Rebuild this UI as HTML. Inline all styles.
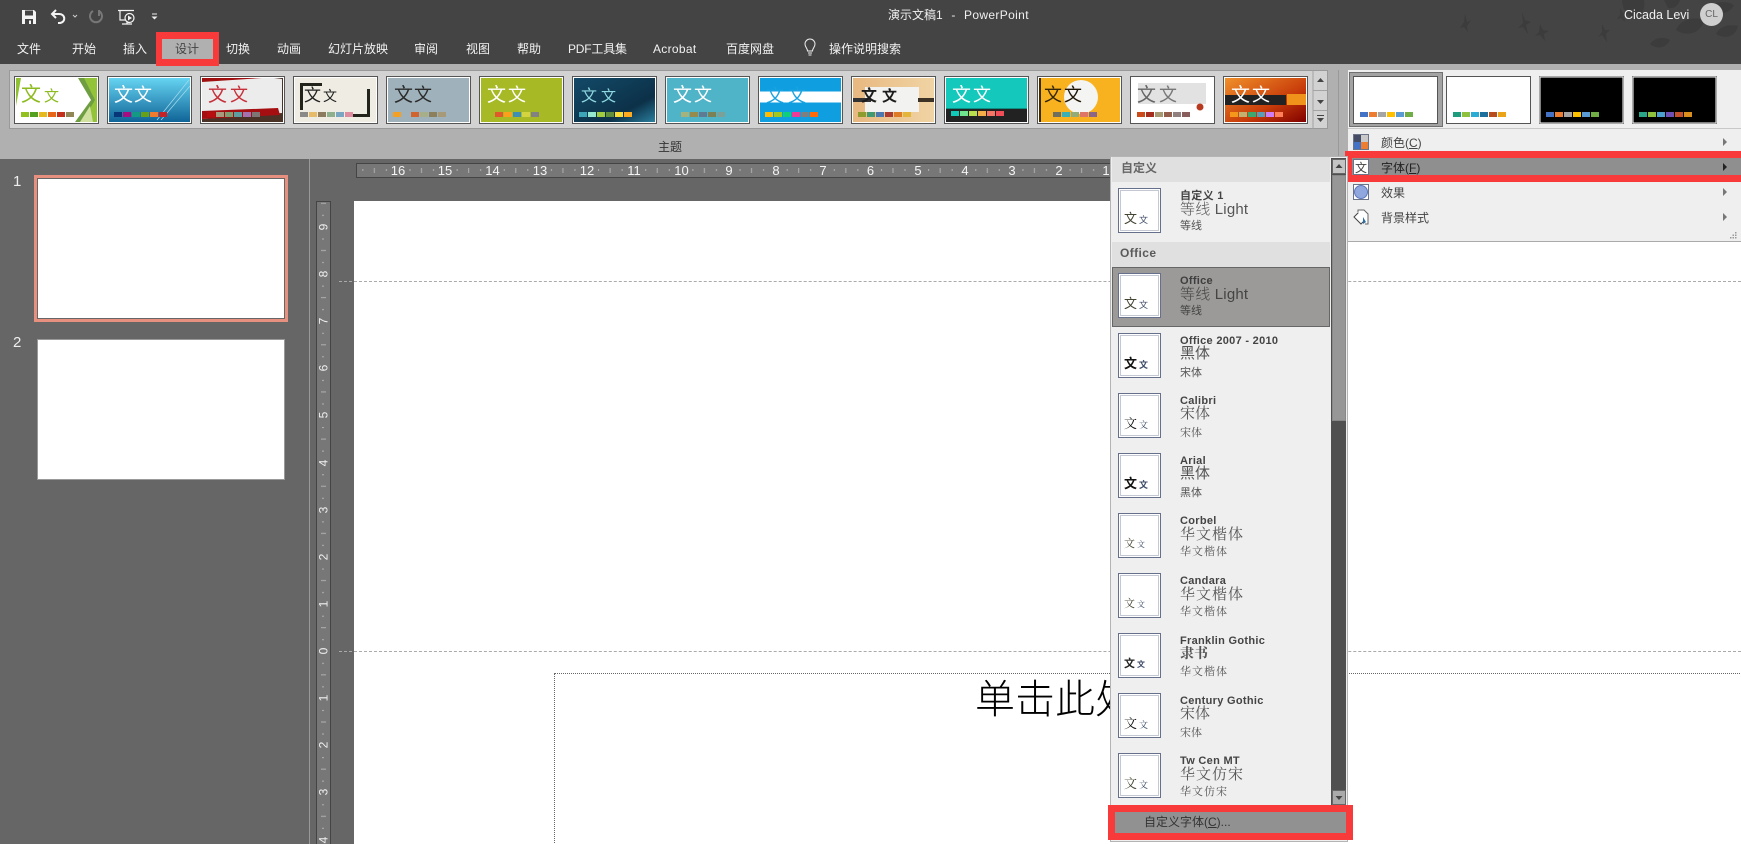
<!DOCTYPE html>
<html lang="zh"><head><meta charset="utf-8"><title>演示文稿1 - PowerPoint</title>
<style>
html,body{margin:0;padding:0;width:1741px;height:844px;overflow:hidden;background:#666}
body{position:relative;font-family:"Liberation Sans","WenQuanYi Zen Hei","Noto Sans CJK SC",sans-serif;font-size:12px;color:#444}
.a,.m,.r,.n,.l2,.l3,.th{position:absolute}
.a,.m,.n,.l2,.l3{white-space:nowrap}
.m{top:39px;height:20px;line-height:20px;color:#f2f2f2;font-size:12px}
svg{position:absolute;overflow:hidden}
svg text{font-family:"Liberation Sans","WenQuanYi Zen Hei","Noto Sans CJK SC",sans-serif}
.th{left:1118px;width:41px;height:43px;border:1px solid #66708c;background:#fff;box-shadow:inset 0 0 0 1px #fff,inset 0 0 0 2px #c3c8d2}
.th b{position:absolute;left:5px;bottom:5px;font-weight:normal;font-size:13px;line-height:14px;color:#443;white-space:nowrap}
.th b i{font-style:normal;font-size:9px;margin-left:2px;color:#3c4a66}
.n{left:1180px;font-weight:bold;font-size:11px;line-height:12px;letter-spacing:.3px;color:#444}
.l2{left:1180px;font-size:15px;line-height:16px;color:#555}
.l3{left:1180px;font-size:11px;line-height:12px;color:#555}
.s{font-family:"Liberation Serif","Noto Serif CJK SC",serif}
.k{letter-spacing:1px}
.mi{left:1381px;height:16px;line-height:16px;font-size:12px;color:#444}
</style></head><body>
<!-- top bars -->
<div class="a" style="left:0;top:0;width:1741px;height:64px;background:#444"></div>
<div class="a" style="left:0;top:64px;width:1741px;height:95px;background:#b0b0b0"></div>
<svg style="left:1440px;top:0" width="301" height="64" viewBox="1440 0 301 64" fill="#3c3c3c">
<path d="M1465 14l2 8 4-2-4 6 1 6-4-5-4 1 4-6z"/><path d="M1522 12l3 8 6 2-5 3 2 9-5-7-5 1 5-5z"/><path d="M1540 24l3 6 6 1-5 3 1 7-5-6-5 1 4-4z"/><path d="M1602 24l3 6 5 0-4 4 1 8-5-7-4 2 4-5z"/><path d="M1620 8l3 5 5 1-4 3 1 5-4-4-4 1 3-4z"/>
<path d="M1622 0h22c2 8-3 18-10 18-7-2-12-10-12-18z"/><path d="M1676 30c4-10 16-14 28-10-2 12-16 18-28 10z"/><path d="M1664 0h16c-2 6-6 9-12 8z"/><path d="M1708 8c6-6 18-8 26-3-4 9-18 12-26 3z"/><path d="M1716 34c4-8 12-10 22-8-2 10-12 14-22 8z"/><path d="M1650 44c5-6 12-8 20-4-4 8-13 10-20 4z"/>
</svg>
<!-- QAT icons -->
<svg style="left:18px;top:6px" width="145" height="22" viewBox="18 6 145 22">
<path d="M22 10h12l2 2v12H22z" fill="#f4f4f4"/><rect x="25" y="10.500" width="8" height="5" fill="#444"/><rect x="25" y="19" width="8" height="5" fill="#444"/><rect x="29" y="20.500" width="2" height="3.500" fill="#f4f4f4"/>
<path d="M56 10l-4 4 4 4M52 14h7c7 0 7 9 0 9h-1" fill="none" stroke="#f4f4f4" stroke-width="2"/>
<path d="M73 15l2 2 2-2" fill="none" stroke="#ccc" stroke-width="1"/>
<path d="M93 11a6 6 0 1 0 6 0M99 10v5h-1" fill="none" stroke="#777" stroke-width="2"/>
<path d="M118 10.500h16M120 11v9h6" fill="none" stroke="#f4f4f4" stroke-width="1.200"/><circle cx="129.500" cy="18" r="4.500" fill="none" stroke="#f4f4f4" stroke-width="1.200"/><path d="M128 15.500l4 2.500-4 2.500z" fill="#f4f4f4"/><path d="M122 24h10M127 21v3" stroke="#f4f4f4" stroke-width="1.200"/>
<path d="M152 14h5" stroke="#eee" stroke-width="1"/><path d="M151.500 16.500h6l-3 3z" fill="#eee"/>
</svg>
<div class="a" style="left:888px;top:7px;height:16px;line-height:16px;color:#f0f0f0;font-size:12px;word-spacing:1px">演示文稿1&nbsp; -&nbsp; <span style="letter-spacing:.35px">PowerPoint</span></div>
<div class="a" style="left:1624px;top:7px;height:16px;line-height:16px;color:#f0f0f0;font-size:12.500px">Cicada Levi</div>
<div class="a" style="left:1700px;top:3px;width:23px;height:23px;border-radius:50%;background:#cfcfcf;color:#666;font-size:10px;line-height:23px;text-align:center">CL</div>
<!-- tab -->
<div class="a" style="left:156px;top:32px;width:51px;height:20px;border:6px solid #f93a3a;border-top-width:7px;border-bottom-width:7px;background:#b0b0b0"></div>
<div class="m" style="left:17px">文件</div><div class="m" style="left:72px">开始</div><div class="m" style="left:123px">插入</div><div class="m" style="left:175px;color:#444">设计</div><div class="m" style="left:226px">切换</div><div class="m" style="left:277px">动画</div><div class="m" style="left:328px">幻灯片放映</div><div class="m" style="left:414px">审阅</div><div class="m" style="left:466px">视图</div><div class="m" style="left:517px">帮助</div><div class="m" style="left:568px;letter-spacing:-.2px">PDF工具集</div><div class="m" style="left:653px;letter-spacing:.3px">Acrobat</div><div class="m" style="left:726px">百度网盘</div><div class="m" style="left:829px">操作说明搜索</div>
<svg style="left:803px;top:38px" width="14" height="20" viewBox="0 0 14 20"><path d="M4.500 13c0-3-2.500-3.500-2.500-7a5 5 0 0 1 10 0c0 3.500-2.500 4-2.500 7zM5 15h4M5.500 17h3" fill="none" stroke="#eee" stroke-width="1"/></svg>
<!-- gallery -->
<div class="a" style="left:9px;top:70px;width:1317px;height:57px;background:#d2d2d2;border:1px solid #999"></div>
<svg style="left:0;top:70px" width="1340" height="60" viewBox="0 70 1340 60">
<defs>
<linearGradient id="g2" x1="0" y1="0" x2="0" y2="1"><stop offset="0" stop-color="#66d4f2"/><stop offset="1" stop-color="#0f6497"/></linearGradient>
<linearGradient id="g7" x1="0" y1="0" x2="1" y2="1"><stop offset="0" stop-color="#134a68"/><stop offset=".7" stop-color="#0c3148"/><stop offset="1" stop-color="#2a7f9e"/></linearGradient>
<linearGradient id="g14" x1="0" y1="0" x2="1" y2="1"><stop offset="0" stop-color="#f0902a"/><stop offset=".6" stop-color="#c83c0a"/><stop offset="1" stop-color="#800000"/></linearGradient>
<linearGradient id="g10" x1="0" y1="0" x2="1" y2="0"><stop offset="0" stop-color="#e8b880"/><stop offset="1" stop-color="#f0d4a4"/></linearGradient>
</defs>
<g font-size="19" stroke="none">
<g transform="translate(14,76)"><rect x=".5" y=".5" width="84" height="47" fill="#fff" stroke="#555"/><path d="M2 2h5l-5 28z" fill="#8fc031"/><path d="M64 2h19v44H61l16-22z" fill="#6f9e42"/><path d="M70 2h13v44H68l13-22z" fill="#93c339"/><path d="M66 46l10-16 3 16z" fill="#cfe09f"/><text x="7" y="25" fill="#8dbb1f" font-size="20">文</text><text x="30" y="25" fill="#8dbb1f" font-size="15">文</text><g transform="translate(7,36)"><rect width="8" height="5" fill="#92c01f"/><rect x="9" width="8" height="5" fill="#54a021"/><rect x="18" width="8" height="5" fill="#e6b91e"/><rect x="27" width="8" height="5" fill="#e76618"/><rect x="36" width="8" height="5" fill="#c42f19"/><rect x="45" width="8" height="5" fill="#918655"/></g></g>
<g transform="translate(107,76)"><rect x=".5" y=".5" width="84" height="47" fill="#fff" stroke="#555"/><rect x="2" y="2" width="81" height="44" fill="url(#g2)"/><path d="M50 44L82 4M54 44L83 10" stroke="#a6dbee" stroke-width=".7"/><text x="7" y="25" fill="#fff">文</text><text x="27" y="25" fill="#fff" font-size="18">文</text><g transform="translate(7,36)"><rect width="8" height="5" fill="#073779"/><rect x="9" width="8" height="5" fill="#a50d80"/><rect x="18" width="8" height="5" fill="#139a84"/><rect x="27" width="8" height="5" fill="#66a019"/><rect x="36" width="8" height="5" fill="#ef7b2f"/><rect x="45" width="8" height="5" fill="#c42327"/></g></g>
<g transform="translate(200,76)"><rect x=".5" y=".5" width="84" height="47" fill="#fff" stroke="#555"/><rect x="2" y="2" width="81" height="44" fill="#4a3226"/><path d="M2 2h72l8 1v34L2 43z" fill="#ececec"/><path d="M2 2h60L2 6z" fill="#a01010"/><path d="M2 35l76-3 2 7L2 43z" fill="#a60f12"/><text x="8" y="25" fill="#c6303a">文</text><text x="30" y="25" fill="#c6303a" font-size="18">文</text><g transform="translate(7,36)"><rect width="8" height="5" fill="#b80e0f"/><rect x="9" width="8" height="5" fill="#a79a7d"/><rect x="18" width="8" height="5" fill="#7f9e72"/><rect x="27" width="8" height="5" fill="#5f9ea0"/><rect x="36" width="8" height="5" fill="#a373b1"/><rect x="45" width="8" height="5" fill="#7e7674"/></g></g>
<g transform="translate(293,76)"><rect x=".5" y=".5" width="84" height="47" fill="#fff" stroke="#555"/><rect x="2" y="2" width="81" height="44" fill="#efece3"/><path d="M7 7h22v3H10v24H7zM74 13h3v28H55v-3h19z" fill="#22231a"/><text x="11" y="25" fill="#222" font-size="17">文</text><text x="30" y="25" fill="#222" font-size="14">文</text><g transform="translate(7,36)"><rect width="8" height="5" fill="#8a8a88"/><rect x="9" width="8" height="5" fill="#e6bc6a"/><rect x="18" width="8" height="5" fill="#8c7b5e"/><rect x="27" width="8" height="5" fill="#8fb08c"/><rect x="36" width="8" height="5" fill="#7ba6c2"/><rect x="45" width="8" height="5" fill="#e08ca0"/></g></g>
<g transform="translate(386,76)"><rect x=".5" y=".5" width="84" height="47" fill="#fff" stroke="#555"/><rect x="2" y="2" width="81" height="44" fill="#9fb2bb"/><text x="8" y="25" fill="#2b2b2b">文</text><text x="28" y="25" fill="#2b2b2b" font-size="18">文</text><g transform="translate(7,36)"><rect width="8" height="5" fill="#f4a024"/><rect x="18" width="8" height="5" fill="#d1642e"/><rect x="27" width="8" height="5" fill="#a7ae8a"/><rect x="36" width="8" height="5" fill="#8c7f5b"/><rect x="45" width="8" height="5" fill="#a79a79"/></g></g>
<g transform="translate(479,76)"><rect x=".5" y=".5" width="84" height="47" fill="#fff" stroke="#555"/><rect x="2" y="2" width="81" height="44" fill="#a7ba26"/><text x="8" y="25" fill="#fff">文</text><text x="29" y="25" fill="#fff" font-size="18">文</text><g transform="translate(16,36)"><rect width="8" height="5" fill="#e15a29"/><rect x="9" width="8" height="5" fill="#f9a11b"/><rect x="18" width="8" height="5" fill="#3f8fb5"/><rect x="27" width="8" height="5" fill="#d4d43e"/><rect x="36" width="8" height="5" fill="#828282"/></g></g>
<g transform="translate(572,76)"><rect x=".5" y=".5" width="84" height="47" fill="#fff" stroke="#555"/><rect x="2" y="2" width="81" height="44" fill="url(#g7)"/><text x="9" y="25" fill="#8fd8e0" font-size="16">文</text><text x="29" y="25" fill="#8fd8e0" font-size="15">文</text><g transform="translate(7,36)"><rect width="8" height="5" fill="#3da5b8"/><rect x="9" width="8" height="5" fill="#96e8d0"/><rect x="18" width="8" height="5" fill="#a1cc3f"/><rect x="27" width="8" height="5" fill="#5f8f3c"/><rect x="36" width="8" height="5" fill="#f9dc34"/><rect x="45" width="8" height="5" fill="#ffaa1f"/></g></g>
<g transform="translate(665,76)"><rect x=".5" y=".5" width="84" height="47" fill="#fff" stroke="#555"/><rect x="2" y="2" width="81" height="44" fill="#50b4c8"/><text x="8" y="25" fill="#fff">文</text><text x="29" y="25" fill="#fff" font-size="18">文</text><g transform="translate(16,36)"><rect width="8" height="5" fill="#a4b27e"/><rect x="9" width="8" height="5" fill="#948b4f"/><rect x="18" width="8" height="5" fill="#5f7b93"/><rect x="27" width="8" height="5" fill="#7a8255"/><rect x="36" width="8" height="5" fill="#7aa098"/></g></g>
<g transform="translate(758,76)"><rect x=".5" y=".5" width="84" height="47" fill="#fff" stroke="#555"/><rect x="2" y="2" width="81" height="44" fill="#0f9ee0"/><rect x="2" y="15.500" width="81" height="11" fill="#fff"/><text x="8" y="26" fill="#19a3e0" font-size="18">文</text><text x="30" y="26" fill="#19a3e0" font-size="18">文</text><g transform="translate(7,36)"><rect width="8" height="5" fill="#ffbc00"/><rect x="9" width="8" height="5" fill="#a2c81f"/><rect x="18" width="8" height="5" fill="#0fcf7a"/><rect x="27" width="8" height="5" fill="#f03a97"/><rect x="36" width="8" height="5" fill="#7f7f7f"/><rect x="45" width="8" height="5" fill="#ff6a0a"/></g></g>
<g transform="translate(851,76)"><rect x=".5" y=".5" width="84" height="47" fill="#fff" stroke="#555"/><rect x="2" y="2" width="81" height="44" fill="url(#g10)"/><rect x="14" y="11" width="54" height="25" fill="#f2f2f0"/><rect x="2" y="22" width="18" height="4" fill="#333"/><rect x="67" y="22" width="16" height="4" fill="#3c3226"/><text x="10" y="25" fill="#1c1c1c" font-size="16" font-weight="bold">文</text><text x="31" y="25" fill="#1c1c1c" font-size="15" font-weight="bold">文</text><g transform="translate(7,36)"><rect width="8" height="5" fill="#8e9c2e"/><rect x="9" width="8" height="5" fill="#3f9a72"/><rect x="18" width="8" height="5" fill="#4c78b0"/><rect x="27" width="8" height="5" fill="#a93b33"/><rect x="36" width="8" height="5" fill="#de7b26"/><rect x="45" width="8" height="5" fill="#e3b53a"/></g></g>
<g transform="translate(944,76)"><rect x=".5" y=".5" width="84" height="47" fill="#fff" stroke="#555"/><rect x="2" y="2" width="81" height="44" fill="#14c8bc"/><rect x="2" y="33" width="81" height="13" fill="#222"/><rect x="2" y="32" width="81" height="1" fill="#0e8f86"/><text x="8" y="25" fill="#fff">文</text><text x="29" y="25" fill="#fff" font-size="18">文</text><g transform="translate(7,35)"><rect width="8" height="5" fill="#10c9b9"/><rect x="9" width="8" height="5" fill="#6ee58e"/><rect x="18" width="8" height="5" fill="#b8de4e"/><rect x="27" width="8" height="5" fill="#f5ae47"/><rect x="36" width="8" height="5" fill="#f77565"/><rect x="45" width="8" height="5" fill="#f24e5a"/></g></g>
<g transform="translate(1037,76)"><rect x=".5" y=".5" width="84" height="47" fill="#fff" stroke="#555"/><rect x="2" y="2" width="81" height="44" fill="#f9b21f"/><rect x="2" y="2" width="2" height="44" fill="#3a2d0c"/><circle cx="44" cy="21" r="17" fill="#f4f4f2"/><text x="7" y="25" fill="#33260a" font-size="18">文</text><text x="27" y="25" fill="#1e1405" font-size="18">文</text><g transform="translate(16,36)"><rect width="8" height="5" fill="#6f6f5f"/><rect x="9" width="8" height="5" fill="#3ab0b4"/><rect x="18" width="8" height="5" fill="#92ab78"/><rect x="27" width="8" height="5" fill="#de7565"/><rect x="36" width="8" height="5" fill="#8b6688"/></g></g>
<g transform="translate(1130,76)"><rect x=".5" y=".5" width="84" height="47" fill="#fff" stroke="#555"/><rect x="8" y="7" width="68" height="21" fill="#e2e2e2"/><circle cx="70" cy="31" r="3.500" fill="#b83a1e"/><text x="7" y="25" fill="#666">文</text><text x="29" y="25" fill="#777" font-size="18">文</text><g transform="translate(7,36)"><rect width="8" height="5" fill="#cc4b1a"/><rect x="9" width="8" height="5" fill="#a42d1d"/><rect x="18" width="8" height="5" fill="#a79a73"/><rect x="27" width="8" height="5" fill="#945e4c"/><rect x="36" width="8" height="5" fill="#918080"/><rect x="45" width="8" height="5" fill="#8a5d5d"/></g></g>
<g transform="translate(1223,76)"><rect x=".5" y=".5" width="84" height="47" fill="#fff" stroke="#555"/><rect x="2" y="2" width="81" height="44" fill="url(#g14)"/><rect x="2" y="19" width="61" height="10" fill="#222"/><rect x="64" y="18" width="19" height="11" fill="#f0931a"/><text x="8" y="25" fill="#fff">文</text><text x="29" y="25" fill="#fff" font-size="18">文</text><g transform="translate(7,36)"><rect width="8" height="5" fill="#f4971a"/><rect x="9" width="8" height="5" fill="#c3b26f"/><rect x="18" width="8" height="5" fill="#3ea76e"/><rect x="27" width="8" height="5" fill="#5b9cb6"/><rect x="36" width="8" height="5" fill="#ce7df2"/><rect x="45" width="8" height="5" fill="#ff8059"/></g></g>
</g>
<path d="M1313 70.500v58M1313 90.500h14M1313 110.500h14" stroke="#a3a3a3" fill="none"/>
<path d="M1317 82h7l-3.500-4zM1317 100h7l-3.500 4zM1317 118h7l-3.500 4z" fill="#444"/><path d="M1317 115.500h7" stroke="#444"/>
</svg>
<div class="a" style="left:658px;top:139px;height:16px;line-height:16px;color:#333">主题</div>
<div class="a" style="left:1338px;top:70px;width:1px;height:89px;background:#999"></div>
<!-- left / work area -->
<div class="a" style="left:309px;top:159px;width:1px;height:685px;background:#999"></div>
<div class="a" style="left:13px;top:173px;height:18px;line-height:18px;font-size:15px;color:#eee">1</div>
<div class="a" style="left:13px;top:334px;height:18px;line-height:18px;font-size:15px;color:#eee">2</div>
<div class="a" style="left:34px;top:175px;width:248px;height:141px;border:3px solid #e89080;background:#fff;box-shadow:inset 0 0 0 1px #666"></div>
<div class="a" style="left:37px;top:339px;width:246px;height:139px;border:1px solid #999;background:#fff"></div>
<div class="a" style="left:354px;top:201px;width:1387px;height:643px;background:#fff"></div>
<!-- guides -->
<div class="a" style="left:339px;top:281px;width:1402px;height:0;border-top:1px dashed #aaa"></div>
<div class="a" style="left:339px;top:651px;width:1402px;height:0;border-top:1px dashed #aaa"></div>
<div class="a" style="left:554px;top:673px;width:1187px;height:171px;border-left:1px dotted #666;border-top:1px dotted #666"></div>
<div class="a" style="left:975px;top:678px;height:44px;line-height:44px;font-size:40px;color:#000;font-family:'Liberation Sans','Noto Sans CJK SC',sans-serif;font-weight:300">单击此处添加标题</div>
<!-- rulers -->
<svg style="left:355px;top:162px" width="770" height="17" viewBox="355 162 770 17">
<defs><pattern id="hp" patternUnits="userSpaceOnUse" x="398" y="162" width="47.150" height="17"><rect x="11.500" y="7" width="1" height="2" fill="#b0b0b0"/><rect x="23" y="6" width="1" height="5" fill="#b0b0b0"/><rect x="35" y="7" width="1" height="2" fill="#b0b0b0"/></pattern></defs>
<rect x="356.500" y="163.500" width="760" height="14" fill="#777" stroke="#444"/><rect x="357" y="164" width="760" height="13" fill="url(#hp)"/>
<g font-size="13" fill="#f4f4f4" text-anchor="middle">
<text x="398" y="175">16</text><text x="445" y="175">15</text><text x="492.500" y="175">14</text><text x="540" y="175">13</text><text x="587" y="175">12</text><text x="634" y="175">11</text><text x="681.500" y="175">10</text><text x="729" y="175">9</text><text x="776" y="175">8</text><text x="823" y="175">7</text><text x="870.500" y="175">6</text><text x="918" y="175">5</text><text x="965" y="175">4</text><text x="1012" y="175">3</text><text x="1059" y="175">2</text><text x="1106" y="175">1</text>
</g></svg>
<svg style="left:316px;top:200px" width="16" height="644" viewBox="316 200 16 644">
<defs><pattern id="vp" patternUnits="userSpaceOnUse" x="316" y="227" width="16" height="47.150"><rect x="6" y="11.500" width="2" height="1" fill="#b0b0b0"/><rect x="5" y="23" width="5" height="1" fill="#b0b0b0"/><rect x="6" y="35" width="2" height="1" fill="#b0b0b0"/></pattern></defs>
<rect x="316.500" y="201.500" width="14" height="660" fill="#777" stroke="#444"/><rect x="317" y="202" width="13" height="660" fill="url(#vp)"/>
<g font-size="12" fill="#f0f0f0" text-anchor="middle">
<text transform="translate(327.500,227) rotate(-90)">9</text><text transform="translate(327.500,274) rotate(-90)">8</text><text transform="translate(327.500,321) rotate(-90)">7</text><text transform="translate(327.500,368) rotate(-90)">6</text><text transform="translate(327.500,415) rotate(-90)">5</text><text transform="translate(327.500,463) rotate(-90)">4</text><text transform="translate(327.500,510) rotate(-90)">3</text><text transform="translate(327.500,557) rotate(-90)">2</text><text transform="translate(327.500,604) rotate(-90)">1</text><text transform="translate(327.500,651) rotate(-90)">0</text><text transform="translate(327.500,698) rotate(-90)">1</text><text transform="translate(327.500,745) rotate(-90)">2</text><text transform="translate(327.500,792) rotate(-90)">3</text><text transform="translate(327.500,840) rotate(-90)">4</text>
</g></svg>
<!-- right panel -->
<div class="a" style="left:1348px;top:70px;width:393px;height:171px;background:#efefef;border-bottom:1px solid #aaa"></div>
<div class="a" style="left:1349px;top:72px;width:94px;height:55px;background:#a3a3a3;border:1px solid #707070;box-sizing:border-box"></div>
<svg style="left:1348px;top:70px" width="393" height="60" viewBox="1348 70 393 60">
<rect x="1353.500" y="76.500" width="84" height="47" fill="#fff" stroke="#555"/><rect x="1446.500" y="76.500" width="84" height="47" fill="#fff" stroke="#555"/><rect x="1539.500" y="76.500" width="84" height="47" fill="#000" stroke="#555" /><rect x="1632.500" y="76.500" width="84" height="47" fill="#000" stroke="#555"/>
<rect x="1540" y="77" width="83" height="46" fill="none" stroke="#fff"/><rect x="1633" y="77" width="83" height="46" fill="none" stroke="#fff"/>
<g transform="translate(1360,112)"><rect width="8" height="5" fill="#4472c4"/><rect x="9" width="8" height="5" fill="#ed7d31"/><rect x="18" width="8" height="5" fill="#a5a5a5"/><rect x="27" width="8" height="5" fill="#ffc000"/><rect x="36" width="8" height="5" fill="#5b9bd5"/><rect x="45" width="8" height="5" fill="#70ad47"/></g>
<g transform="translate(1453,112)"><rect width="8" height="5" fill="#1e9c7e"/><rect x="9" width="8" height="5" fill="#90c13e"/><rect x="18" width="8" height="5" fill="#2bacd4"/><rect x="27" width="8" height="5" fill="#1f6f9c"/><rect x="36" width="8" height="5" fill="#b84d1d"/><rect x="45" width="8" height="5" fill="#eba317"/></g>
<g transform="translate(1546,112)"><rect width="8" height="5" fill="#4472c4"/><rect x="9" width="8" height="5" fill="#ed7d31"/><rect x="18" width="8" height="5" fill="#a5a5a5"/><rect x="27" width="8" height="5" fill="#ffc000"/><rect x="36" width="8" height="5" fill="#5b9bd5"/><rect x="45" width="8" height="5" fill="#70ad47"/></g>
<g transform="translate(1639,112)"><rect width="8" height="5" fill="#2aa587"/><rect x="9" width="8" height="5" fill="#8fc13f"/><rect x="18" width="8" height="5" fill="#4aa0cf"/><rect x="27" width="8" height="5" fill="#6e4fb4"/><rect x="36" width="8" height="5" fill="#c44f2a"/><rect x="45" width="8" height="5" fill="#d98e1d"/></g>
</svg>
<div class="a" style="left:1348px;top:128px;width:393px;height:1px;background:#c8c8c8"></div>
<div class="a" style="left:1345px;top:151px;width:396px;height:31px;background:#f93a3a"></div>
<div class="a" style="left:1352px;top:158px;width:389px;height:17px;background:#8f8f8f"></div>
<svg style="left:1352px;top:132px" width="18" height="96" viewBox="1352 132 18 96">
<rect x="1353.500" y="134.500" width="15" height="15" fill="#fff" stroke="#6b7489"/><rect x="1354" y="135" width="7" height="7" fill="#444c66"/><rect x="1361" y="135" width="7" height="7" fill="#c9c9c9"/><rect x="1354" y="142" width="7" height="7" fill="#4472c4"/><rect x="1361" y="142" width="7" height="7" fill="#ed7d31"/>
<rect x="1353.500" y="159.500" width="15" height="15" fill="#fff" stroke="#6b7489"/><text x="1355" y="172" font-size="12" fill="#444">文</text>
<rect x="1353.500" y="184.500" width="15" height="15" fill="#fff" stroke="#6b7489"/><circle cx="1361" cy="192" r="6.500" fill="#8fa6df" stroke="#5b78b8"/>
<path d="M1354 217l6-6 7 7-6 6z" fill="#fff" stroke="#444"/><path d="M1358 212v-2h6l4 4v10h-3" fill="#fff" stroke="#666"/><path d="M1363 217l3 5-3 2z" fill="#2e6da4"/>
</svg>
<div class="a mi" style="top:135px">颜色(<u>C</u>)</div><div class="a mi" style="top:160px;color:#222">字体(<u>F</u>)</div><div class="a mi" style="top:185px">效果</div><div class="a mi" style="top:210px">背景样式</div>
<svg style="left:1722px;top:135px" width="8" height="90" viewBox="0 0 8 90" fill="#777"><path d="M1 3l4 4-4 4zM1 53l4 4-4 4zM1 78l4 4-4 4z"/><path d="M1 28l4 4-4 4z" fill="#222"/></svg>
<svg style="left:1730px;top:232px" width="8" height="7" viewBox="0 0 8 7" fill="#999"><rect x="5" y="0" width="1.500" height="1.500"/><rect x="2.500" y="2.500" width="1.500" height="1.500"/><rect x="5" y="2.500" width="1.500" height="1.500"/><rect x="0" y="5" width="1.500" height="1.500"/><rect x="2.500" y="5" width="1.500" height="1.500"/><rect x="5" y="5" width="1.500" height="1.500"/></svg>
<!-- dropdown -->
<div class="a" style="left:1110px;top:156px;width:238px;height:686px;background:#efefef;border:1px solid #b4b4b4;box-sizing:border-box"></div>
<div class="a" style="left:1112px;top:157px;width:218px;height:25px;background:#e0e0e0"></div>
<div class="a" style="left:1121px;top:160px;height:16px;line-height:16px;font-weight:bold;color:#666">自定义</div>
<div class="a" style="left:1112px;top:242px;width:218px;height:25px;background:#e0e0e0"></div>
<div class="a" style="left:1120px;top:245px;height:16px;line-height:16px;font-weight:bold;color:#5a5a5a;letter-spacing:.4px">Office</div>
<div class="a" style="left:1112px;top:267px;width:218px;height:60px;background:#9b9a98;border:1px solid #666;box-sizing:border-box"></div>
<!-- scrollbar -->
<div class="a" style="left:1331px;top:158px;width:15px;height:647px;background:#505050"></div>
<div class="a" style="left:1332px;top:159px;width:14px;height:15px;background:#c4c4c4;border:1px solid #666;box-sizing:border-box"></div>
<div class="a" style="left:1332px;top:175px;width:14px;height:246px;background:#979797;border:1px solid #888;box-sizing:border-box"></div>
<div class="a" style="left:1332px;top:790px;width:14px;height:15px;background:#aaa;border:1px solid #666;box-sizing:border-box"></div>
<svg style="left:1332px;top:159px" width="14" height="646" viewBox="0 0 14 646" fill="#444"><path d="M3.500 9h7L7 5zM3.500 637h7L7 641z"/></svg>
<!-- font rows -->
<div class="th" style="top:188px"><b>文<i>文</i></b></div><div class="n" style="top:190px">自定义 1</div><div class="l2" style="top:202px;font-weight:300;letter-spacing:.2px">等线 Light</div><div class="l3" style="top:220px">等线</div>
<div class="th" style="top:273px"><b>文<i>文</i></b></div><div class="n" style="top:275px;color:#3e3e3e">Office</div><div class="l2" style="top:287px;color:#444;font-weight:300;letter-spacing:.2px">等线 Light</div><div class="l3" style="top:305px;color:#444">等线</div>
<div class="th" style="top:333px"><b style="color:#111;font-weight:bold">文<i>文</i></b></div><div class="n" style="top:335px">Office 2007 - 2010</div><div class="l2" style="top:346px">黑体</div><div class="l3" style="top:367px">宋体</div>
<div class="th" style="top:393px"><b class="s" style="color:#111">文<i>文</i></b></div><div class="n" style="top:395px">Calibri</div><div class="l2 s" style="top:406px">宋体</div><div class="l3 s" style="top:427px">宋体</div>
<div class="th" style="top:453px"><b style="color:#111;font-weight:bold">文<i>文</i></b></div><div class="n" style="top:455px">Arial</div><div class="l2" style="top:466px">黑体</div><div class="l3" style="top:487px">黑体</div>
<div class="th" style="top:513px"><b class="s" style="font-size:11px">文<i style="font-size:8px">文</i></b></div><div class="n" style="top:515px">Corbel</div><div class="l2 s k" style="top:527px">华文楷体</div><div class="l3 s k" style="top:546px">华文楷体</div>
<div class="th" style="top:573px"><b class="s" style="font-size:11px">文<i style="font-size:8px">文</i></b></div><div class="n" style="top:575px">Candara</div><div class="l2 s k" style="top:587px">华文楷体</div><div class="l3 s k" style="top:606px">华文楷体</div>
<div class="th" style="top:633px"><b style="font-size:11px;color:#222;font-weight:bold">文<i style="font-size:8px">文</i></b></div><div class="n" style="top:635px">Franklin Gothic</div><div class="l2 s" style="top:647px;font-size:14px;font-weight:bold">隶书</div><div class="l3 s k" style="top:666px">华文楷体</div>
<div class="th" style="top:693px"><b class="s" style="color:#111">文<i>文</i></b></div><div class="n" style="top:695px">Century Gothic</div><div class="l2 s" style="top:706px">宋体</div><div class="l3 s" style="top:727px">宋体</div>
<div class="th" style="top:753px"><b class="s">文<i>文</i></b></div><div class="n" style="top:755px">Tw Cen MT</div><div class="l2 s k" style="top:767px">华文仿宋</div><div class="l3 s k" style="top:786px">华文仿宋</div>
<!-- custom fonts button -->
<div class="a" style="left:1108px;top:805px;width:245px;height:35px;background:#f93a3a"></div>
<div class="a" style="left:1115px;top:812px;width:231px;height:21px;background:#919191"></div>
<div class="a" style="left:1144px;top:814px;height:16px;line-height:16px;color:#333">自定义字体(<u>C</u>)...</div>
</body></html>
